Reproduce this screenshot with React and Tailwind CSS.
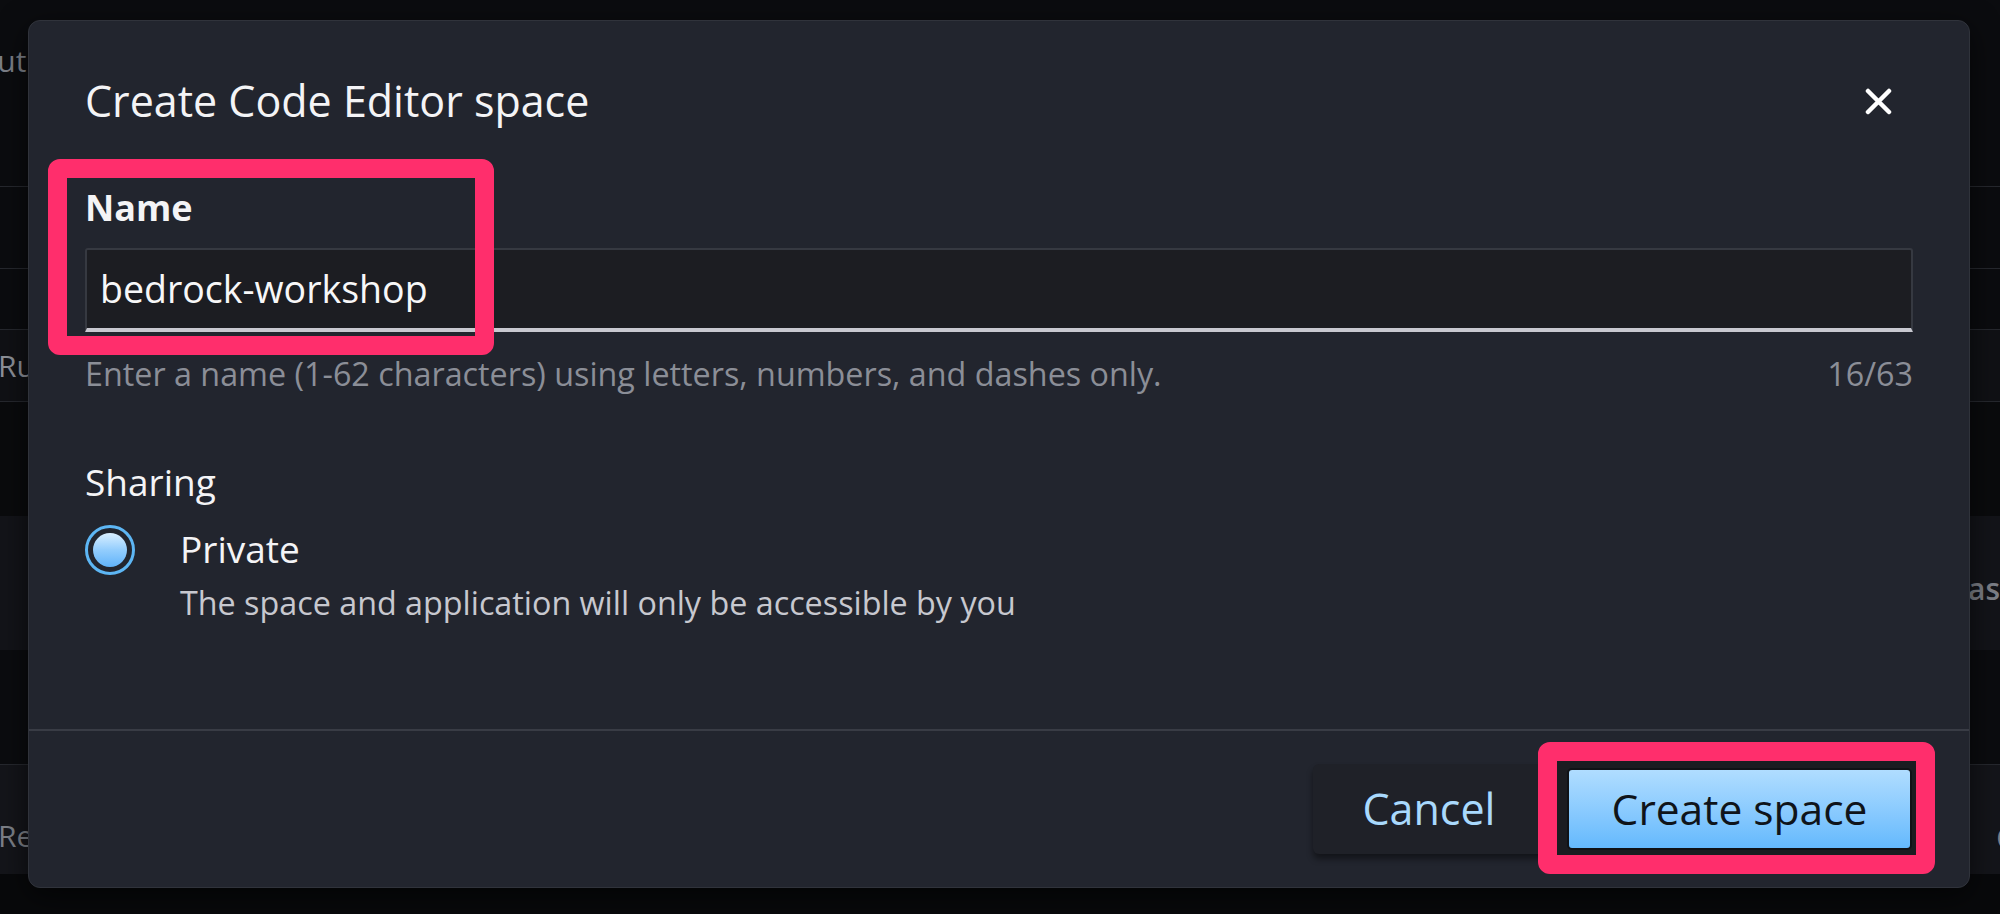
import React from "react";

// ─── Backdrop page (dimmed, mostly hidden by the modal) ──────────────────────
function BackdropPage() {
  return (
    <div className="flex flex-col w-full h-full text-[30px] text-[#7d8088]">
      <div className="h-[187px] border-b border-[#26282e] flex justify-between items-start">
        <span className="mt-[38px] -ml-[26px]">Out</span>
        <span />
      </div>
      <div className="h-[82px] border-b border-[#26282e]" />
      <div className="h-[60px]" />
      <div className="h-[73px] bg-[#101115] border-y border-[#26282e] flex items-center">
        <span className="-ml-[2px] text-[#8e9199]">Run</span>
      </div>
      <div className="h-[114px] bg-[#0a0b0d]" />
      <div className="h-[134px] bg-[#131419] flex items-center justify-end">
        <span className="-mr-[12px] mt-[10px] font-semibold">Last</span>
      </div>
      <div className="h-[114px] bg-[#0b0c0f]" />
      <div className="h-[110px] bg-[#14151a] border-t border-[#26282e] flex items-center justify-between">
        <span className="-ml-[2px] mt-[31px]">Restart</span>
        <span className="-mr-[18px] mt-[36px] font-semibold">G</span>
      </div>
      <div className="flex-1 bg-[#08090b]" />
    </div>
  );
}

function CloseIcon() {
  return (
    <svg width="27" height="27" viewBox="0 0 27 27" className="mr-[21px]">
      <path d="M3 3 L24 24 M24 3 L3 24" stroke="#ffffff" strokeWidth="4.5" strokeLinecap="round" />
    </svg>
  );
}

function Radio() {
  return (
    <div className="w-[50px] h-[50px] rounded-full border-[3px] border-[#5db6f4] flex items-center justify-center shrink-0">
      <div className="w-[34px] h-[34px] rounded-full bg-gradient-to-b from-[#d9efff] via-[#93cdfd] to-[#5fb3fa]" />
    </div>
  );
}

export default function App() {
  return (
    <div className="relative w-[2000px] h-[914px] overflow-hidden bg-[#0b0c0f] font-['Open_Sans','Noto_Sans',sans-serif]">
      <BackdropPage />

      {/* Modal */}
      <div className="absolute left-[28px] top-[20px] w-[1942px] h-[868px] flex flex-col rounded-[12px] border border-[#30333b] bg-[#22252e] shadow-[0_8px_30px_rgba(0,0,0,0.6)]">
        <div className="flex-1 px-[56px] pt-[56px]">
          {/* Header */}
          <div className="flex items-center justify-between">
            <h1 className="text-[43px] leading-[48px] font-medium text-[#f4f4f6]">Create Code Editor space</h1>
            <CloseIcon />
          </div>

          {/* Name field */}
          <div className="relative mt-[62px]">
            <label className="block text-[36px] leading-[42px] font-bold text-[#f4f4f6]">Name</label>
            <div className="mt-[19px] h-[84px] flex items-center bg-[#1c1d22] border-2 border-[#363941] border-b-4 border-b-[#c8c8d0] rounded-t-[3px] pl-[13px]">
              <span className="text-[37.5px] leading-[44px] text-[#f7f7f8]">bedrock-workshop</span>
            </div>
            <div className="absolute -left-[37px] -top-[28px] w-[446px] h-[196px] rounded-[12px] border-[19px] border-[#ff2e6c]" />
          </div>
          <div className="mt-[22px] flex justify-between text-[32.3px] leading-[38px] text-[#8b8e97]">
            <span>Enter a name (1-62 characters) using letters, numbers, and dashes only.</span>
            <span>16/63</span>
          </div>

          {/* Sharing */}
          <div className="mt-[68px] text-[37px] leading-[44px] text-[#f4f4f6]">Sharing</div>
          <div className="mt-[21px] flex items-start">
            <Radio />
            <div className="ml-[45px] mt-[2px] flex flex-col">
              <span className="text-[37px] leading-[44px] font-medium text-[#f4f4f6]">Private</span>
              <span className="mt-[12px] text-[32.3px] leading-[38px] text-[#c7c8cf]">
                The space and application will only be accessible by you
              </span>
            </div>
          </div>
        </div>

        {/* Footer */}
        <div className="h-[158px] border-t-2 border-[#393c45] flex items-center justify-end pr-[57px]">
          <button className="w-[244px] h-[90px] pr-[12px] rounded-[6px] bg-[#1f2128] shadow-[0_5px_6px_rgba(0,0,0,0.45)] text-[43px] leading-[48px] font-medium text-[#a9d9fd] flex items-center justify-center">
            Cancel
          </button>
          <div className="relative ml-[10px]">
            <div className="absolute -left-[29px] -top-[26px] -right-[23px] -bottom-[24px] rounded-[12px] border-[19px] border-[#ff2e6c] bg-[#1b1c21]" />
            <button className="relative w-[345px] h-[82px] rounded-[5px] border-2 border-[#101216] bg-gradient-to-b from-[#b0ddff] to-[#64b9fd] text-[42.5px] leading-[48px] font-medium text-[#0f141a] flex items-center justify-center">
              Create space
            </button>
          </div>
        </div>
      </div>
    </div>
  );
}
